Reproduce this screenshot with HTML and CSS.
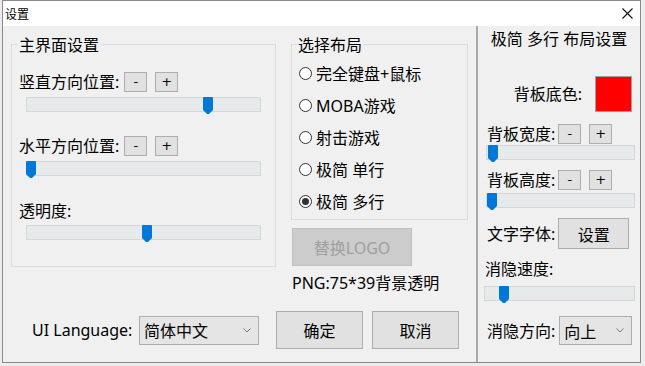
FILE: index.html
```html
<!DOCTYPE html>
<html lang="zh-CN">
<head>
  <meta charset="UTF-8">
  <title>设置</title>
  <link rel="stylesheet" href="styles.css">
</head>
<body>
  <div class="window">
    <!-- Title bar -->
    <div class="titlebar">
      <span class="title">设置</span>
      <svg class="close" width="11" height="11" viewBox="0 0 11 11">
        <path d="M0.5 0.5L10.5 10.5M10.5 0.5L0.5 10.5" stroke="#111" stroke-width="1.1" fill="none"/>
      </svg>
    </div>

    <div class="panes">
      <!-- Main settings dialog -->
      <div class="main">
        <div class="top-row">
          <div class="group main-group">
            <span class="group-title">主界面设置</span>

            <div class="step-row first">
              <span class="label">竖直方向位置:</span>
              <button class="step">-</button>
              <button class="step">+</button>
            </div>
            <div class="slider s-after-row"><span class="thumb" style="left: 176px"></span></div>

            <div class="step-row next">
              <span class="label">水平方向位置:</span>
              <button class="step">-</button>
              <button class="step">+</button>
            </div>
            <div class="slider s-after-row"><span class="thumb" style="left: -1px"></span></div>

            <div class="step-row last">
              <span class="label">透明度:</span>
            </div>
            <div class="slider s-after-label"><span class="thumb" style="left: 115px"></span></div>
          </div>

          <div class="layout-col">
            <div class="group layout-group">
              <span class="group-title">选择布局</span>
              <div class="radio-list">
                <label class="radio"><span class="dot"></span>完全键盘+鼠标</label>
                <label class="radio"><span class="dot"></span>MOBA游戏</label>
                <label class="radio"><span class="dot"></span>射击游戏</label>
                <label class="radio"><span class="dot"></span>极简 单行</label>
                <label class="radio"><span class="dot checked"></span>极简 多行</label>
              </div>
            </div>
            <button class="logo-btn" disabled>替换LOGO</button>
            <div class="png-note">PNG:75*39背景透明</div>
          </div>
        </div>

        <div class="bottom-row">
          <span class="lang-label">UI Language:</span>
          <div class="combo lang-combo">
            <span>简体中文</span>
            <svg width="8" height="5" viewBox="0 0 8 5"><path d="M0.5 0.5L4 4L7.5 0.5" stroke="#777" fill="none"/></svg>
          </div>
          <button class="dlg-btn ok-btn">确定</button>
          <button class="dlg-btn">取消</button>
        </div>
      </div>

      <!-- Side panel for current layout -->
      <div class="side">
        <div class="side-title">极简 多行 布局设置</div>

        <div class="color-row">
          <span class="label">背板底色:</span>
          <span class="swatch"></span>
        </div>

        <div class="side-row width-row">
          <span class="label">背板宽度:</span>
          <button class="step">-</button>
          <button class="step">+</button>
        </div>
        <div class="slider side-slider s1"><span class="thumb" style="left: 1px"></span></div>

        <div class="side-row height-row">
          <span class="label">背板高度:</span>
          <button class="step">-</button>
          <button class="step">+</button>
        </div>
        <div class="slider side-slider s2"><span class="thumb" style="left: 0px"></span></div>

        <div class="side-row font-row">
          <span class="label">文字字体:</span>
          <button class="font-btn">设置</button>
        </div>

        <div class="fade-label">消隐速度:</div>
        <div class="slider fade-slider"><span class="thumb" style="left: 14px"></span></div>

        <div class="side-row dir-row">
          <span class="label">消隐方向:</span>
          <div class="combo dir-combo">
            <span>向上</span>
            <svg width="8" height="5" viewBox="0 0 8 5"><path d="M0.5 0.5L4 4L7.5 0.5" stroke="#777" fill="none"/></svg>
          </div>
        </div>
      </div>
    </div>
  </div>
</body>
</html>
```

FILE: styles.css
```css
/* Page and window frame */
body {
  margin: 0;
  background: #ececec;
  font-family: "Noto Sans", "Noto Sans CJK SC", sans-serif;
  font-size: 16px;
  color: #000;
}

.window {
  margin-left: 2px;
  width: 639px;
  height: 363px;
  box-sizing: border-box;
  border: 1px solid #8a8a8a;
  background: #f0f0f0;
  display: flex;
  flex-direction: column;
}

/* Title bar */
.titlebar {
  height: 25px;
  flex: none;
  background: #fff;
  display: flex;
  align-items: center;
  justify-content: space-between;
  padding: 0 7px 0 2px;
}

.title {
  font-family: "Noto Sans CJK SC", sans-serif;
  font-size: 12px;
  line-height: 16px;
}

.panes {
  display: flex;
  flex: 1;
}

/* Main dialog */
.main {
  width: 473px;
  padding: 18px 0 0 8px;
  box-sizing: border-box;
}

.top-row {
  display: flex;
  align-items: flex-start;
}

.group {
  border: 1px solid #dcdcdc;
  box-sizing: border-box;
}

.group-title {
  display: block;
  width: fit-content;
  margin: -9px 0 0 -1px;
  padding: 0 1px;
  background: #f0f0f0;
  line-height: 18px;
}

.main-group {
  width: 265px;
  height: 223px;
  padding-left: 7px;
}

.label {
  line-height: 20px;
  margin-right: 5px;
  white-space: nowrap;
}

.step-row {
  display: flex;
  align-items: center;
  height: 20px;
}
.step-row.first { margin-top: 18px; }
.step-row.next { margin-top: 24px; }
.step-row.last { margin-top: 25px; }

/* Small -/+ buttons */
.step {
  width: 23px;
  height: 20px;
  padding: 0;
  border: 1px solid #adadad;
  background: #e1e1e1;
  font-family: "DejaVu Sans", sans-serif;
  font-size: 13px;
  line-height: 16px;
  color: #000;
}
.step + .step { margin-left: 8px; }

/* Track bar */
.slider {
  position: relative;
  width: 235px;
  height: 15px;
  box-sizing: border-box;
  border: 1px solid #d6d6d6;
  background: #e7eaea;
  margin-left: 7px;
}
.s-after-row { margin-top: 5px; }
.s-after-label { margin-top: 4px; }

.thumb {
  position: absolute;
  top: -1px;
  width: 10px;
  height: 17px;
  background: #0078d7;
  border-radius: 1px 1px 0 0;
  clip-path: polygon(0 0, 100% 0, 100% 76%, 60% 100%, 40% 100%, 0 76%);
}

/* Layout chooser column */
.layout-col {
  width: 177px;
  margin-left: 15px;
}

.layout-group {
  height: 176px;
  padding-left: 6px;
}

.radio-list {
  margin-top: 3px;
}

.radio {
  display: flex;
  align-items: center;
  height: 32px;
  white-space: nowrap;
}

.dot {
  width: 13px;
  height: 13px;
  box-sizing: border-box;
  border: 1px solid #333;
  border-radius: 50%;
  background: #fff;
  margin: 0 4px 0 1px;
  display: flex;
  align-items: center;
  justify-content: center;
}
.dot.checked::after {
  content: "";
  width: 7px;
  height: 7px;
  border-radius: 50%;
  background: #333;
}

.logo-btn {
  display: block;
  width: 120px;
  height: 38px;
  margin: 8px 0 0 1px;
  border: 1px solid #bfbfbf;
  background: #cccccc;
  color: #9f9f9f;
  font-family: inherit;
  font-size: 16px;
  padding: 0;
}

.png-note {
  margin: 7px 0 0 1px;
  line-height: 20px;
  white-space: nowrap;
}

/* Bottom row */
.bottom-row {
  display: flex;
  align-items: center;
  height: 38px;
  margin: 18px 0 0 21px;
}

.lang-label {
  width: 107px;
  white-space: nowrap;
}

.combo {
  height: 29px;
  box-sizing: border-box;
  border: 1px solid #adadad;
  background: #e5e5e5;
  display: flex;
  align-items: center;
  justify-content: space-between;
  padding: 0 7px 0 4px;
}

.lang-combo {
  width: 120px;
}

.dlg-btn {
  width: 87px;
  height: 38px;
  padding: 0;
  border: 1px solid #adadad;
  background: #e1e1e1;
  font-family: inherit;
  font-size: 16px;
  color: #000;
}
.ok-btn { margin-left: 17px; }
.dlg-btn + .dlg-btn { margin-left: 9px; }

/* Side panel */
.side {
  flex: 1;
  border-left: 2px solid #a9a9a9;
  padding-top: 3px;
}

.side-title {
  text-align: center;
  line-height: 20px;
  white-space: nowrap;
}

.color-row {
  display: flex;
  justify-content: flex-end;
  align-items: center;
  height: 36px;
  margin-top: 27px;
  padding-right: 8px;
}
.color-row .label { margin-right: 13px; }

.swatch {
  width: 37px;
  height: 36px;
  box-sizing: border-box;
  border: 1px solid #a0a0a0;
  background: #ff0000;
}

.side-row {
  display: flex;
  align-items: center;
  padding-left: 9px;
}
.side-row .label { margin-right: 3px; }
.width-row { height: 20px; margin-top: 12px; }
.height-row { height: 20px; margin-top: 10px; }
.font-row { height: 31px; margin-top: 10px; }
.dir-row { height: 29px; margin-top: 15px; }

.side-slider {
  width: 149px;
  margin-left: 8px;
}
.side-slider.s1 { margin-top: 1px; }
.side-slider.s2 { margin-top: 3px; }

.font-btn {
  width: 71px;
  height: 31px;
  padding: 0;
  border: 1px solid #adadad;
  background: #e1e1e1;
  font-family: inherit;
  font-size: 16px;
  color: #000;
}

.fade-label {
  margin-top: 10px;
  padding-left: 7px;
  line-height: 20px;
}

.fade-slider {
  width: 151px;
  margin: 7px 0 0 6px;
}

.dir-combo {
  width: 73px;
  margin-left: 1px;
}
```
